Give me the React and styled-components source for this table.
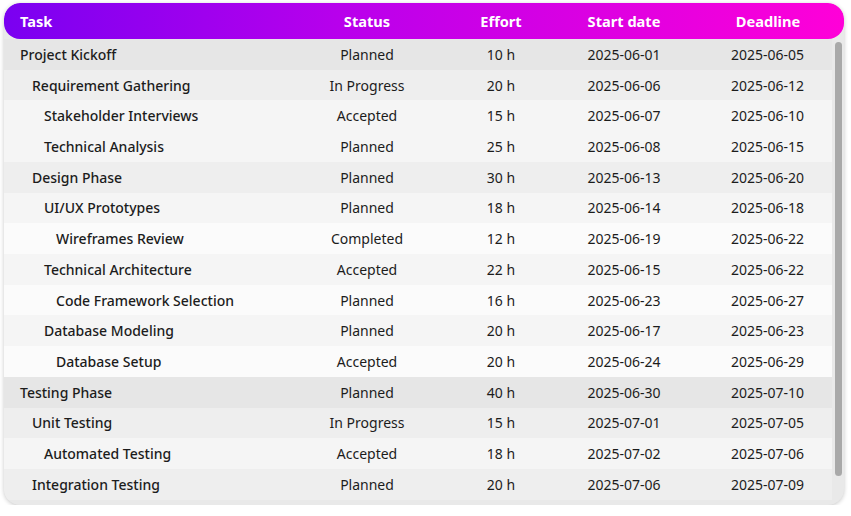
import React from "react";
import styled, { createGlobalStyle } from "styled-components";

const GlobalStyle = createGlobalStyle`
  html, body {
    margin: 0;
    padding: 0;
    background: #ffffff;
    font-family: "Noto Sans", "Open Sans", sans-serif;
  }
`;

const Page = styled.div`
  padding: 3px 7px 0 4px;
`;

const Card = styled.div`
  width: 840px;
  height: 502px;
  box-sizing: border-box;
  border-radius: 16px;
  background: #e9e9e9;
  box-shadow: 0 1px 4px rgba(0, 0, 0, 0.22);
  overflow: hidden;
  display: flex;
  flex-direction: column;
  padding-bottom: 5px;
`;

const HeaderRow = styled.div`
  display: grid;
  grid-template-columns: 296px 134px 134px 132px 144px;
  align-items: center;
  height: 36px;
  flex: none;
  border-radius: 16px;
  background: linear-gradient(90deg, #7a00f1 0%, #b800ec 40%, #ff00d8 100%);
  color: #ffffff;
  font-size: 14.6px;
  font-weight: 700;
`;

const HeadCell = styled.div`
  text-align: ${p => (p.$left ? "left" : "center")};
  padding-left: ${p => (p.$left ? "16px" : "0")};
  padding-right: ${p => p.$pr || 0}px;
`;

const Body = styled.div`
  flex: 1;
  display: flex;
  min-height: 0;
`;

const List = styled.div`
  flex: 1;
  overflow: hidden;
`;

const Track = styled.div`
  width: 12px;
  flex: none;
  display: flex;
  justify-content: center;
  padding: 3px 0 0;
  box-sizing: border-box;
`;

const Thumb = styled.div`
  width: 7px;
  height: 434px;
  border-radius: 4px;
  background: #a9a9a9;
`;

const shades = ["#e6e6e6", "#eeeeee", "#f5f5f5", "#fbfbfb"];

const Row = styled.div`
  display: grid;
  grid-template-columns: 296px 134px 134px 132px 132px;
  align-items: center;
  height: 30.73px;
  background: ${p => shades[p.$level]};
  color: #1c1c1c;
  font-size: 14px;
`;

const TaskCell = styled.div`
  padding-left: ${p => 16 + p.$level * 12}px;
  font-weight: 500;
  white-space: nowrap;
`;

const Cell = styled.div`
  text-align: center;
  padding-right: ${p => p.$pr || 0}px;
  padding-left: ${p => p.$pl || 0}px;
  white-space: nowrap;
`;

const tasks = [
  ["Project Kickoff", 0, "Planned", "10 h", "2025-06-01", "2025-06-05"],
  ["Requirement Gathering", 1, "In Progress", "20 h", "2025-06-06", "2025-06-12"],
  ["Stakeholder Interviews", 2, "Accepted", "15 h", "2025-06-07", "2025-06-10"],
  ["Technical Analysis", 2, "Planned", "25 h", "2025-06-08", "2025-06-15"],
  ["Design Phase", 1, "Planned", "30 h", "2025-06-13", "2025-06-20"],
  ["UI/UX Prototypes", 2, "Planned", "18 h", "2025-06-14", "2025-06-18"],
  ["Wireframes Review", 3, "Completed", "12 h", "2025-06-19", "2025-06-22"],
  ["Technical Architecture", 2, "Accepted", "22 h", "2025-06-15", "2025-06-22"],
  ["Code Framework Selection", 3, "Planned", "16 h", "2025-06-23", "2025-06-27"],
  ["Database Modeling", 2, "Planned", "20 h", "2025-06-17", "2025-06-23"],
  ["Database Setup", 3, "Accepted", "20 h", "2025-06-24", "2025-06-29"],
  ["Testing Phase", 0, "Planned", "40 h", "2025-06-30", "2025-07-10"],
  ["Unit Testing", 1, "In Progress", "15 h", "2025-07-01", "2025-07-05"],
  ["Automated Testing", 2, "Accepted", "18 h", "2025-07-02", "2025-07-06"],
  ["Integration Testing", 1, "Planned", "20 h", "2025-07-06", "2025-07-09"],
];

export default function App() {
  return (
    <Page>
      <GlobalStyle />
      <Card>
        <HeaderRow>
          <HeadCell $left>Task</HeadCell>
          <HeadCell>Status</HeadCell>
          <HeadCell>Effort</HeadCell>
          <HeadCell $pr={20}>Start date</HeadCell>
          <HeadCell $pr={8}>Deadline</HeadCell>
        </HeaderRow>
        <Body>
          <List>
            {tasks.map(([name, level, status, effort, start, end]) => (
              <Row key={name} $level={level}>
                <TaskCell $level={level}>{name}</TaskCell>
                <Cell>{status}</Cell>
                <Cell>{effort}</Cell>
                <Cell $pr={20}>{start}</Cell>
                <Cell $pl={3}>{end}</Cell>
              </Row>
            ))}
          </List>
          <Track>
            <Thumb />
          </Track>
        </Body>
      </Card>
    </Page>
  );
}
